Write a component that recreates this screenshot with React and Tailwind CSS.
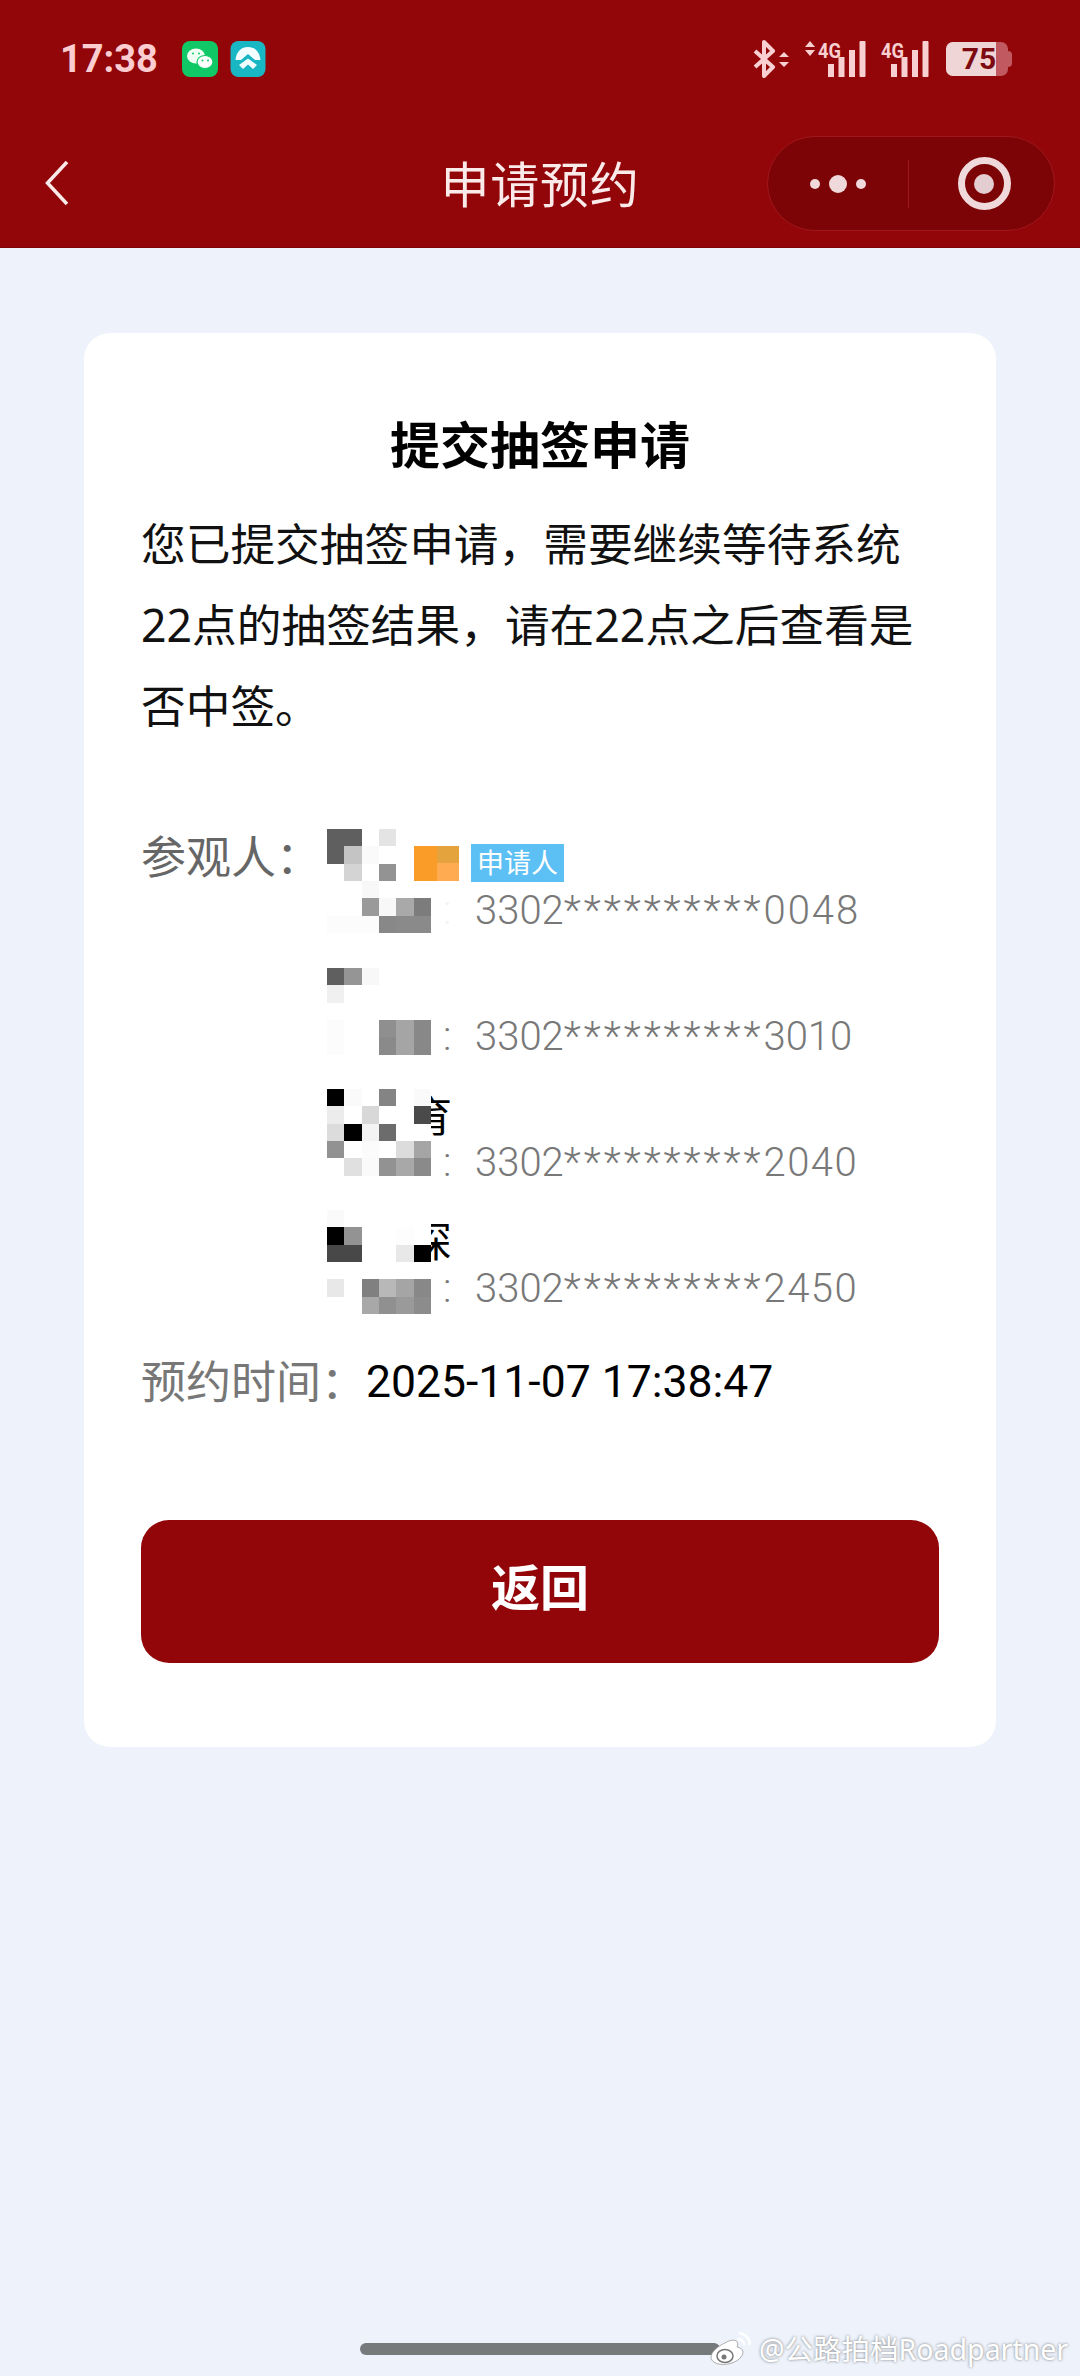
const W = "#ffffff";
const people = [
  {
    head: "3302", stars: "**********", tail: "0048", tailClass: "tracking-[2px]", top: "top-[13px]", tag: true, colonClass: "text-[#f4f4f4]",
    rows: [
      ["#5f5f5f", "#5f5f5f", W, "#e4e4e4", W, W],
      ["#5f5f5f", "#c4c4c4", "#fafafa", W, W, W],
      [W, "#d4d4d4", W, "#939393", W, W],
      [W, W, "#f8f8f8", W, W, W],
      [W, W, "#9a9a9a", "#f8f8f8", "#a9a9a9", "#7c7c7c"],
      ["#fcfcfc", "#fcfcfc", "#fcfcfc", "#888888", "#8a8a8a", "#8a8a8a"],
    ],
  },
  {
    head: "3302", stars: "**********", tail: "3010", tailClass: "tracking-normal", top: "top-[26px]", colonClass: "text-[#787878]",
    rows: [
      ["#5f5f5f", "#959595", "#f8f8f8", W, W, W],
      ["#f0f0f0", W, W, W, W, W],
      [W, W, W, W, W, W],
      ["#fcfcfc", W, W, "#8f8f8f", "#a5a5a5", "#888888"],
      ["#fcfcfc", W, W, "#8a8a8a", "#a5a5a5", "#888888"],
    ],
  },
  {
    head: "3302", stars: "**********", tail: "2040", tailClass: "tracking-[1.5px]", top: "top-[21px]", colonClass: "text-[#787878]", frag: "育", fragClass: "top-[27px]",
    rows: [
      ["#000000", "#fafafa", W, "#848484", W, "#fafafa"],
      ["#ececec", W, "#d8d8d8", W, W, "#4a4a4a"],
      ["#dcdcdc", "#000000", "#f3f3f3", "#6c6c6c", W, W],
      ["#929292", W, "#fbfbfb", W, "#dcdcdc", "#a5a5a5"],
      [W, "#e0e0e0", "#fafafa", "#929292", "#a8a8a8", "#8a8a8a"],
    ],
  },
  {
    head: "3302", stars: "**********", tail: "2450", tailClass: "tracking-[1.5px]", top: "top-[16px]", colonClass: "text-[#787878]", frag: "深", fragClass: "top-[26px]",
    rows: [
      ["#fafafa", W, W, W, W, W],
      ["#000000", "#939393", W, W, "#fdfdfd", W],
      ["#484848", "#484848", W, W, "#e8e8e8", "#000000"],
      [W, W, W, W, W, W],
      ["#e8e8e8", W, "#808080", "#b8b8b8", "#a5a5a5", "#888888"],
      [W, W, "#a8a8a8", "#909090", "#9a9a9a", "#8c8c8c"],
    ],
  },
];

function Mosaic({ rows }) {
  return (
    <div className="grid grid-cols-[repeat(6,17.33px)] auto-rows-[17.33px]">
      {rows.flat().map((c, i) => (
        <div key={i} style={{ backgroundColor: c }} />
      ))}
    </div>
  );
}

function Person({ p }) {
  return (
    <div className="relative h-[126px] flex flex-col justify-end">
      <div className="h-[63px] flex items-center pl-[116px] text-[#787878] text-[40px] font-['Roboto','Noto_Sans_CJK_SC',sans-serif] font-light whitespace-nowrap">
        <span className={`w-[32px] ${p.colonClass}`}>:</span>
        <span>{p.head}</span>
        <span className="tracking-[3px]">{p.stars}</span>
        <span className={p.tailClass}>{p.tail}</span>
      </div>
      {p.frag && (
        <div className={`absolute left-[83px] ${p.fragClass} w-[42px] flex justify-end text-black text-[42px] leading-[42px]`}>
          <span className="shrink-0">{p.frag}</span>
        </div>
      )}
      <div className={`absolute left-0 ${p.top}`}>
        <Mosaic rows={p.rows} />
      </div>
      {p.tag && (
        <div className="absolute left-[87px] top-[28px] flex items-center">
          <div className="w-[45px] h-[35px] grid grid-cols-2 grid-rows-2">
            <div className="bg-[#f99d28]" />
            <div className="bg-[#e4a33c]" />
            <div className="bg-[#f99d28]" />
            <div className="bg-[#ffab52]" />
          </div>
          <div className="ml-[12px] w-[93px] h-[38px] bg-[#5dc0f5] text-white text-[27px] leading-[38px] text-center whitespace-nowrap">
            申请人
          </div>
        </div>
      )}
    </div>
  );
}

function Signal({ arrows }) {
  return (
    <svg width={arrows ? 61 : 48} height="38" viewBox={arrows ? "0 0 61 38" : "0 0 48 38"} className="shrink-0">
      <g transform={arrows ? "translate(13 0)" : ""}>
        {arrows && <path d="M-13 7 L-8 1 L-3 7 Z M-13 10 L-3 10 L-8 16 Z" fill="#f8d0d2" />}
        <text x="0" y="18" fontSize="20" fontWeight="700" fill="#f8d0d2" fontFamily="Roboto" textLength="23" lengthAdjust="spacingAndGlyphs">4G</text>
        <rect x="10" y="24" width="6" height="13" fill="#f8d0d2" />
        <rect x="20.5" y="17" width="6" height="20" fill="#f8d0d2" />
        <rect x="31" y="10" width="6" height="27" fill="#f8d0d2" />
        <rect x="41.5" y="1" width="6" height="36" rx="1" fill="#f8d0d2" />
      </g>
    </svg>
  );
}

export default function App() {
  return (
    <div className="relative w-[1080px] h-[2376px] overflow-hidden bg-[#edf2fb] flex flex-col font-['Noto_Sans','Noto_Sans_CJK_SC',sans-serif]">
      <header className="h-[248px] bg-[#920609] border-b border-[#7d0508] shrink-0">
        <div className="h-[118px] flex items-center pl-[60px] pr-[68px]">
          <span className="text-[38px] font-bold text-[#fbcdd0] font-['Roboto',sans-serif] leading-none w-[122px]">17:38</span>
          <svg width="36" height="36" viewBox="0 0 36 36" className="shrink-0">
            <rect width="36" height="36" rx="8" fill="#11c866" />
            <ellipse cx="14" cy="15" rx="9" ry="7.5" fill="#f0fff4" />
            <ellipse cx="23" cy="21" rx="8" ry="6.5" fill="#ffffff" stroke="#11c866" strokeWidth="1.2" />
            <circle cx="11" cy="12.5" r="1" fill="#11c866" />
            <circle cx="17" cy="12.5" r="1" fill="#11c866" />
            <circle cx="20.5" cy="19.5" r="1" fill="#11c866" />
            <circle cx="26" cy="19.5" r="1" fill="#11c866" />
          </svg>
          <svg width="36" height="36" viewBox="0 0 35 36" className="ml-[12px] shrink-0">
            <rect width="35" height="36" rx="8" fill="#19b6c4" />
            <path d="M5 19 C6 10 11 6 17.5 6 C24 6 29 10 30 19 L24.5 19 L17.5 13 L10.5 19 Z" fill="#f2fdff" />
            <path d="M6.5 23 L17.5 15.5 L28.5 23 L28 26 L23 30 L17.5 25 L12 30 L7 26 Z" fill="#19b6c4" />
            <path d="M8.5 24 L17.5 17.5 L26.5 24 L22.5 28 L17.5 23.5 L12.5 28 Z" fill="#f2fdff" />
          </svg>
          <div className="ml-auto flex items-center">
            <svg width="37" height="38" viewBox="0 0 37 38" className="shrink-0">
              <path d="M2 11 L20 27 L11 36 L11 2 L20 11 L2 27" fill="none" stroke="#f8d0d2" strokeWidth="4" strokeLinejoin="round" />
              <path d="M26 17 L31 12 L36 17 Z M26 22 L36 22 L31 27 Z" fill="#f8d0d2" />
            </svg>
            <div className="ml-[15px]"><Signal arrows /></div>
            <div className="ml-[15px]"><Signal /></div>
            <div className="ml-[17px] relative w-[62px] h-[34px] rounded-[7px] bg-[#c05a60] overflow-hidden">
              <div className="absolute left-0 top-0 bottom-0 w-[50px] bg-[#f0d5d7]" />
              <span className="absolute left-[17px] top-0 w-[32px] h-full flex items-center justify-center text-[#7d0a10] font-bold text-[30px] leading-none font-['Roboto',sans-serif]">75</span>
            </div>
            <div className="w-[4px] h-[16px] rounded-r-[4px] bg-[#c05a60]" />
          </div>
        </div>
        <div className="h-[129px] grid grid-cols-[1fr_auto_1fr] items-center">
          <svg width="24" height="46" viewBox="0 0 24 46" className="ml-[45px]">
            <path d="M22 2 L2.5 23 L22 44" fill="none" stroke="#fbeaea" strokeWidth="3.5" />
          </svg>
          <div className="text-[49px] leading-none text-[#fbeaea] font-normal whitespace-nowrap tracking-[0.8px] pt-[3px]">申请预约</div>
          <div className="justify-self-end mr-[25px] mt-[2px] w-[288px] h-[95px] rounded-full bg-[#7c0306] border border-[#a0181c] flex items-center">
            <div className="flex-1 flex items-center justify-center gap-[9px]">
              <div className="w-[10px] h-[10px] rounded-full bg-[#efd9da]" />
              <div className="w-[18px] h-[18px] rounded-full bg-[#efd9da]" />
              <div className="w-[10px] h-[10px] rounded-full bg-[#efd9da]" />
            </div>
            <div className="w-px h-[48px] bg-[#9a1a1e]" />
            <div className="flex-1 flex items-center justify-center pl-[5px]">
              <div className="w-[53px] h-[53px] rounded-full border-[7px] border-[#efd9da] flex items-center justify-center">
                <div className="w-[20px] h-[20px] rounded-full bg-[#e3cdd0]" />
              </div>
            </div>
          </div>
        </div>
      </header>

      <main className="mt-[85px] mx-[84px] bg-white rounded-[26px] px-[57px] pt-[80px] pb-[84px] shrink-0">
        <h1 className="text-[50px] leading-[64px] font-bold text-black text-center mb-[26px]">提交抽签申请</h1>
        <p className="text-[44.7px] leading-[81px] text-[#111111] whitespace-nowrap">
          您已提交抽签申请，需要继续等待系统<br />
          22点的抽签结果，请在22点之后查看是<br />
          否中签。
        </p>
        <div className="mt-[70px] flex">
          <div className="w-[186px] shrink-0 pt-[11px] text-[45px] leading-[60px] text-[#666666] whitespace-nowrap">参观人：</div>
          <div className="w-[611px]">
            {people.map((p) => <Person key={p.tail} p={p} />)}
          </div>
        </div>
        <div className="mt-[31px] h-[62px] flex items-center whitespace-nowrap">
          <span className="text-[45px] text-[#777777]">预约时间：</span>
          <span className="text-[44.5px] text-black font-['Roboto',sans-serif]">2025-11-07 17:38:47</span>
        </div>
        <button className="mt-[107px] w-full h-[143px] rounded-[28px] bg-[#920609] text-white text-[49px] font-bold pb-[8px]">返回</button>
      </main>

      <div className="mt-auto mb-[21px] ml-[360px] w-[360px] h-[12px] rounded-full bg-[#767a7a] shrink-0" />

      <div className="absolute left-[710px] top-[2329px] flex items-center gap-[7px] whitespace-nowrap text-white text-[28.5px] leading-[40px] [text-shadow:0_0_3px_#777777]">
        <svg width="42" height="34" viewBox="0 0 42 34">
          <path d="M29 1 A12 12 0 0 1 40 13 M28 7 A6 6 0 0 1 34 13" fill="none" stroke="#ffffff" strokeWidth="2.5" />
          <path d="M15 11 C23 6 30 8 27 15 C34 16 35 22 29 27 C20 35 1 34 1 25 C1 20 8 14 15 11 Z" fill="#ffffff" stroke="#999999" strokeWidth="0.8" />
          <ellipse cx="15" cy="24" rx="8" ry="6.5" fill="none" stroke="#777777" strokeWidth="1.5" />
          <circle cx="14" cy="25" r="2.5" fill="#777777" />
        </svg>
        <span>@公路拍档Roadpartner</span>
      </div>
    </div>
  );
}
